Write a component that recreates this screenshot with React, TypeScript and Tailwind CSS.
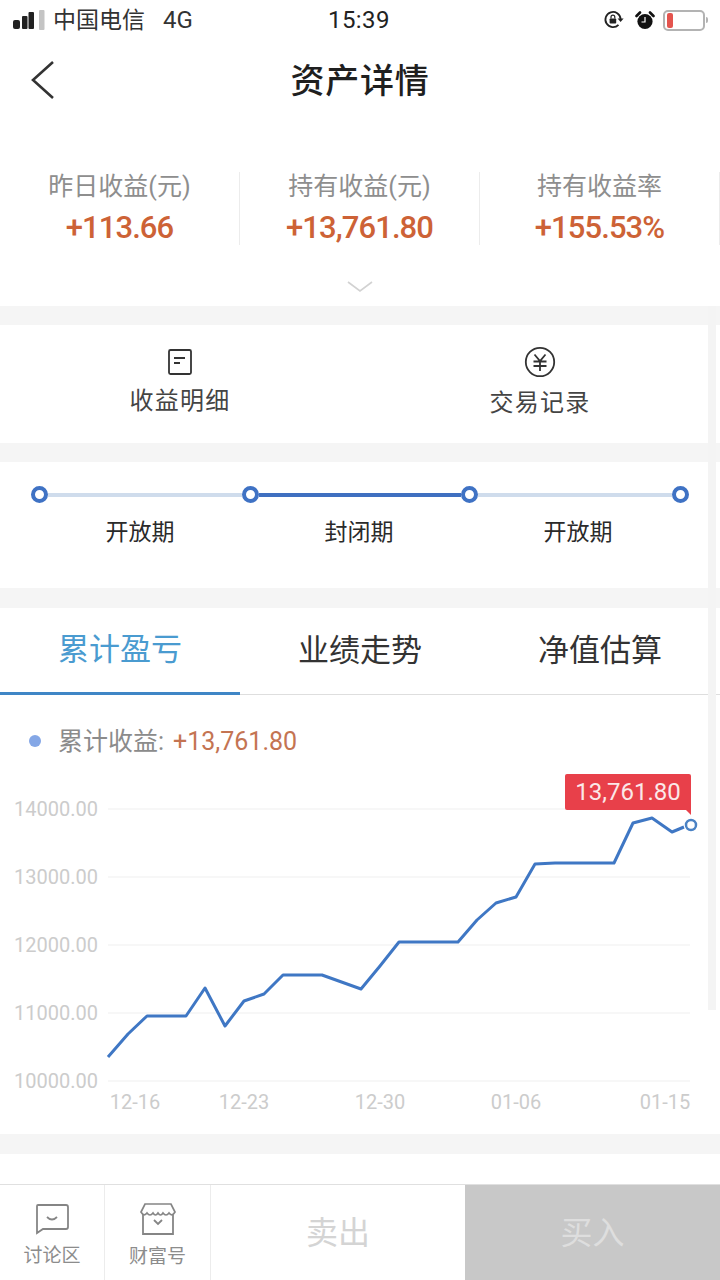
const points =
  "108,1057 128,1034 147,1016 186,1016 205,988 225,1026 244,1001 264,994 283,975 322,975 361,989 380,966 399,942 458,942 477,920 496,903 516,897 535,864 555,863 614,863 633,823 652,818 672,832 684,827";

const yLabels = [
  { y: 809, text: "14000.00" },
  { y: 877, text: "13000.00" },
  { y: 945, text: "12000.00" },
  { y: 1013, text: "11000.00" },
  { y: 1081, text: "10000.00" },
];

const xLabels = [
  { x: 135, text: "12-16" },
  { x: 244, text: "12-23" },
  { x: 380, text: "12-30" },
  { x: 516, text: "01-06" },
  { x: 665, text: "01-15" },
];

function StatusBar() {
  return (
    <div className="h-10 flex items-center relative text-[#333]">
      <svg width="32" height="22" viewBox="0 0 32 22" className="ml-[13px]">
        <rect x="0" y="11" width="7" height="9" rx="2" fill="#222" />
        <rect x="9" y="7" width="5.500" height="13" rx="1" fill="#222" />
        <rect x="15.500" y="3" width="5.500" height="17" rx="1" fill="#222" />
        <rect x="26" y="1" width="5.500" height="20" rx="1" fill="#c4c4c4" />
      </svg>
      <span className="ml-[8px] text-[23px] leading-none">中国电信</span>
      <span className="ml-[18px] text-[24px] leading-none">4G</span>
      <span className="absolute left-[328px] top-[7px] text-[24px] leading-[26px] tracking-[0.4px] text-[#222]">
        15:39
      </span>
      <div className="ml-auto flex items-center mr-[12px]">
        <svg width="22" height="20" viewBox="0 0 22 20" className="mr-[10px]">
          <path d="M15.5 14.8A7.6 7.6 0 1 1 17.6 9" fill="none" stroke="#222" strokeWidth="1.8" />
          <path d="M14.6 8.500h6l-3 3.600z" fill="#222" />
          <rect x="6.600" y="8.400" width="6.600" height="5.200" rx="0.800" fill="#222" />
          <path d="M8 8.400V7a1.900 1.900 0 0 1 3.800 0v1.400" fill="none" stroke="#222" strokeWidth="1.200" />
        </svg>
        <svg width="20" height="21" viewBox="0 0 20 20" className="mr-[8px]">
          <circle cx="10" cy="11" r="7.600" fill="#111" />
          <path d="M1.500 5.500L5 2M18.500 5.500L15 2" stroke="#111" strokeWidth="2.600" strokeLinecap="round" />
          <path d="M10 6.500V11.500H6.500" fill="none" stroke="#fff" strokeWidth="1.200" />
        </svg>
        <div className="w-[42px] h-[21px] rounded-[5px] border-2 border-[#b3b3b3] p-[1px] pl-[2px]">
          <div className="w-[6px] h-full rounded-[2px] bg-[#e4544e]" />
        </div>
        <div className="w-[2px] h-[6px] ml-[1px] rounded-r bg-[#b3b3b3]" />
      </div>
    </div>
  );
}

function NavBar() {
  return (
    <div className="h-[82px] flex items-center justify-center relative">
      <svg width="26" height="40" viewBox="0 0 26 40" className="absolute left-[30px] top-[20px]">
        <path d="M23 2L3 20l20 18" fill="none" stroke="#333" strokeWidth="2.600" />
      </svg>
      <h1 className="text-[34px] leading-none font-medium tracking-[0.8px] text-[#1f1f1f]">资产详情</h1>
    </div>
  );
}

function Stat({ label, value }: { label: string; value: string }) {
  return (
    <div className="flex flex-col items-center border-r border-[#ececec] h-[73px]">
      <span className="text-[25px] leading-[30px] text-[#8e8e8e]">{label}</span>
      <span className="mt-[7px] text-[31px] leading-[38px] font-medium tracking-[-0.9px] text-[#cd6236]">{value}</span>
    </div>
  );
}

function Gap({ h }: { h: string }) {
  return <div className={`${h} bg-[#f5f5f5]`} />;
}

function Stats() {
  return (
    <div className="h-[184px] pt-[50px] flex flex-col items-stretch">
      <div className="grid grid-cols-3">
        <Stat label="昨日收益(元)" value="+113.66" />
        <Stat label="持有收益(元)" value="+13,761.80" />
        <Stat label="持有收益率" value="+155.53%" />
      </div>
      <svg width="26" height="12" viewBox="0 0 26 12" className="mt-[36px] mx-auto">
        <path d="M1 1l12 9 12-9" fill="none" stroke="#d2d2d2" strokeWidth="1.600" />
      </svg>
    </div>
  );
}

function Actions() {
  return (
    <div className="h-[118px] grid grid-cols-2 text-[#444]">
      <div className="flex flex-col items-center pt-[23px]">
        <svg width="26" height="28" viewBox="0 0 26 28">
          <rect x="2" y="2" width="22" height="24" rx="1.500" fill="none" stroke="#333" strokeWidth="1.800" />
          <path d="M7 10h11M7 15h6" stroke="#333" strokeWidth="1.800" />
        </svg>
        <span className="mt-[9px] text-[24px] leading-[32px] tracking-[1.300px]">收益明细</span>
      </div>
      <div className="flex flex-col items-center pt-[21px]">
        <svg width="32" height="32" viewBox="0 0 32 32">
          <circle cx="16" cy="16" r="14.200" fill="none" stroke="#333" strokeWidth="1.800" />
          <path d="M10.500 8.500L16 15l5.500-6.500M9.500 15.500h13M9.500 20h13M16 15v10" fill="none" stroke="#333" strokeWidth="1.800" />
        </svg>
        <span className="mt-[9px] text-[24px] leading-[32px] tracking-[1.300px]">交易记录</span>
      </div>
    </div>
  );
}

function Dot() {
  return <div className="w-[17px] h-[17px] shrink-0 rounded-full border-[4px] border-[#3f72c4] bg-white" />;
}

function Timeline() {
  return (
    <div className="h-[126px] pt-[24px]">
      <div className="flex items-center px-[31px]">
        <Dot />
        <div className="h-[4px] w-[194px] bg-[#cfdcec]" />
        <Dot />
        <div className="h-[4px] w-[202px] bg-[#3f6fc0]" />
        <Dot />
        <div className="h-[4px] flex-1 bg-[#cfdcec]" />
        <Dot />
      </div>
      <div className="mt-[15px] pr-[2px] flex justify-center gap-[150px] text-[23px] leading-[30px] text-[#2a2a2a]">
        <span>开放期</span>
        <span>封闭期</span>
        <span>开放期</span>
      </div>
    </div>
  );
}

function Tabs() {
  return (
    <div className="h-[87px] grid grid-cols-3 border-b border-[#dedede] text-[31px] text-[#333]">
      <div className="flex items-center justify-center border-b-[3px] border-[#3f86c6] text-[#4a9bd0] h-[87px]">
        累计盈亏
      </div>
      <div className="flex items-center justify-center">业绩走势</div>
      <div className="flex items-center justify-center">净值估算</div>
    </div>
  );
}

function Chart() {
  return (
    <div className="h-[439px] relative">
      <div className="h-[76px] flex items-center pl-[29px] pt-[16px] text-[25px] leading-none">
        <div className="w-[12px] h-[12px] rounded-full bg-[#84a7e6]" />
        <span className="ml-[17px] text-[#8b8b8b]">累计收益:</span>
        <span className="ml-[9px] text-[#c47452]">+13,761.80</span>
      </div>
      <svg width="720" height="363" viewBox="0 771 720 363" className="block">
        {yLabels.map((l) => (
          <g key={l.text}>
            <line x1="108" x2="690" y1={l.y} y2={l.y} stroke="#f4f4f4" strokeWidth="1.500" />
            <text x="14" y={l.y + 7} fontSize="20" fill="#cccccc">
              {l.text}
            </text>
          </g>
        ))}
        {xLabels.map((l) => (
          <text key={l.text} x={l.x} y="1109" fontSize="20" fill="#cccccc" textAnchor="middle">
            {l.text}
          </text>
        ))}
        <polyline points={points} fill="none" stroke="#3f77c4" strokeWidth="3" strokeLinejoin="round" />
        <circle cx="691" cy="825" r="5" fill="#fff" stroke="#4a82c4" strokeWidth="2.500" />
        <path d="M684 808h7v7z" fill="#e8404a" />
      </svg>
      <div className="absolute left-[565px] top-[79px] w-[126px] h-[36px] rounded-[2px] bg-[#e8404a] flex items-center justify-center text-[24px] leading-none text-[#fbe8e8]">
        13,761.80
      </div>
    </div>
  );
}

function BottomBar() {
  return (
    <div className="h-[96px] flex border-t border-[#e0e0e0]">
      <div className="w-[105px] flex flex-col items-center pt-[18px] border-r border-[#ececec]">
        <svg width="36" height="32" viewBox="0 0 36 32">
          <path
            d="M4 2h28a2 2 0 0 1 2 2v20a2 2 0 0 1-2 2H9l-6 4V3a1 1 0 0 1 1-1z"
            fill="none"
            stroke="#858585"
            strokeWidth="1.800"
          />
          <path d="M13 14q5 5 10 0" fill="none" stroke="#858585" strokeWidth="1.800" />
        </svg>
        <span className="mt-[8px] text-[19px] leading-[26px] text-[#8c8c8c]">讨论区</span>
      </div>
      <div className="w-[106px] flex flex-col items-center pt-[18px] border-r border-[#ececec]">
        <svg width="36" height="32" viewBox="0 0 36 32">
          <path d="M5 1h26l4 8q-3 5-6 1-3 4-6 0-2.500 4-5 0-2.500 4-5 0-3 4-6 0-3 4-6-1z" fill="none" stroke="#858585" strokeWidth="1.700" />
          <path d="M3 12v19h30V12" fill="none" stroke="#858585" strokeWidth="1.800" />
          <path d="M14 17l4 4 4-4" fill="none" stroke="#858585" strokeWidth="1.800" />
        </svg>
        <span className="mt-[9px] text-[19px] leading-[26px] text-[#8c8c8c]">财富号</span>
      </div>
      <div className="flex-1 flex items-center justify-center text-[32px] text-[#d4d4d4]">卖出</div>
      <div className="w-[255px] flex items-center justify-center bg-[#c8c8c8] text-[32px] text-[#dedede]">
        买入
      </div>
    </div>
  );
}

export default function App() {
  return (
    <div
      className="w-[720px] h-[1280px] bg-white relative overflow-hidden"
      style={{ fontFamily: 'Roboto, "Noto Sans CJK SC", sans-serif' }}
    >
      <StatusBar />
      <NavBar />
      <Stats />
      <Gap h="h-[19px]" />
      <Actions />
      <Gap h="h-[19px]" />
      <Timeline />
      <Gap h="h-[20px]" />
      <Tabs />
      <Chart />
      <Gap h="h-[20px]" />
      <div className="h-[30px]" />
      <BottomBar />
      {/* scroll indicator over the page */}
      <div className="absolute left-[708px] top-[306px] w-[8px] h-[704px] bg-[#f4f4f4]" />
    </div>
  );
}
